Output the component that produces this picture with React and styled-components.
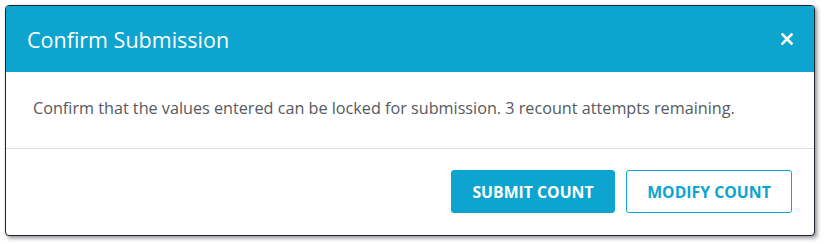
import styled, { createGlobalStyle } from 'styled-components'

const GlobalStyle = createGlobalStyle`
  body {
    margin: 0;
    background: #ffffff;
    font-family: 'Open Sans', 'Liberation Sans', sans-serif;
  }
`

const Page = styled.div`
  padding: 5px 9px 8px 5px;
`

const Modal = styled.div`
  box-sizing: border-box;
  width: 810px;
  height: 231px;
  border: 1px solid #1c2430;
  border-radius: 4px;
  overflow: hidden;
  background: #ffffff;
  box-shadow: 2px 2px 4px rgba(0, 0, 0, 0.45);
  display: flex;
  flex-direction: column;
`

const Header = styled.div`
  height: 66px;
  background: #0da4d0;
  display: flex;
  align-items: center;
  justify-content: space-between;
  padding: 0 21px 0 21px;
  flex-shrink: 0;
`

const Title = styled.h2`
  margin: 0;
  font-size: 21.5px;
  font-weight: 400;
  color: #ffffff;
`

const Close = styled.button`
  border: 0;
  background: none;
  padding: 0;
  display: flex;
  cursor: pointer;
`

const Body = styled.p`
  margin: 0;
  padding: 24px 27px 0;
  height: 77px;
  box-sizing: border-box;
  font-size: 16.2px;
  line-height: 24px;
  color: #555a5e;
  border-bottom: 1px solid #e0e0e0;
`

const Footer = styled.div`
  flex: 1;
  display: flex;
  justify-content: flex-end;
  align-items: flex-start;
  gap: 11px;
  padding: 21px 22px 0;
`

const Button = styled.button`
  box-sizing: border-box;
  height: 43px;
  width: ${p => p.$width}px;
  border-radius: 3px;
  border: 1px solid #0da4d0;
  background: ${p => (p.$primary ? '#0da4d0' : '#ffffff')};
  color: ${p => (p.$primary ? '#ffffff' : '#0da4d0')};
  font-family: 'Open Sans', 'Liberation Sans', sans-serif;
  font-size: 15.8px;
  font-weight: 700;
  text-transform: uppercase;
  cursor: pointer;
`

function App() {
  return (
    <Page>
      <GlobalStyle />
      <Modal>
        <Header>
          <Title>Confirm Submission</Title>
          <Close aria-label='close'>
            <svg width='12' height='12' viewBox='0 0 12 12'>
              <path d='M1.5 1.5 L10.5 10.5 M10.5 1.5 L1.5 10.5' stroke='#fff' strokeWidth='2.6' strokeLinecap='square' />
            </svg>
          </Close>
        </Header>
        <Body>
          Confirm that the values entered can be locked for submission. 3 recount attempts remaining.
        </Body>
        <Footer>
          <Button $primary $width={164}>Submit Count</Button>
          <Button $width={166}>Modify Count</Button>
        </Footer>
      </Modal>
    </Page>
  )
}

export default App
